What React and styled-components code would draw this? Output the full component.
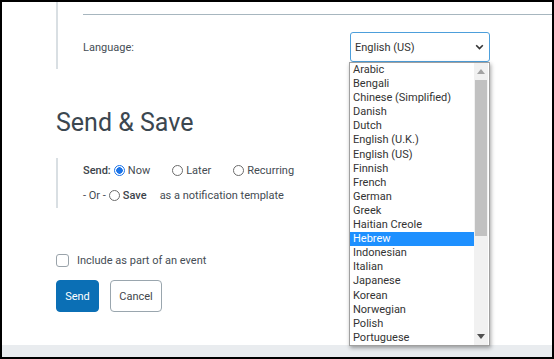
import React, { useState } from 'react';
import styled, { createGlobalStyle } from 'styled-components';

const languages = [
    'Arabic', 'Bengali', 'Chinese (Simplified)', 'Danish', 'Dutch', 'English (U.K.)',
    'English (US)', 'Finnish', 'French', 'German', 'Greek', 'Haitian Creole', 'Hebrew',
    'Indonesian', 'Italian', 'Japanese', 'Korean', 'Norwegian', 'Polish', 'Portuguese',
];

const App = () => {
    const [sendWhen, setSendWhen] = useState('now');
    const hovered = 'Hebrew';

    return (
        <>
            <GlobalStyle />
            <Frame>
                <Content>
                    <Section>
                        <Rule />
                        <FieldRow>
                            <Label>Language:</Label>
                            <SelectWrap>
                                <SelectBox>
                                    <span>English (US)</span>
                                    <svg width="9" height="6" viewBox="0 0 9 6">
                                        <path d="M1.2 1.2 L4.5 4.5 L7.8 1.2" fill="none" stroke="#333" strokeWidth="1.6" />
                                    </svg>
                                </SelectBox>
                                <DropList>
                                    <Options>
                                        {languages.map((lang) => (
                                            <Option key={lang} active={lang === hovered}>{lang}</Option>
                                        ))}
                                    </Options>
                                    <ScrollBar>
                                        <Arrow>
                                            <svg width="8" height="5" viewBox="0 0 8 5"><path d="M0 5 L4 0 L8 5 Z" fill="#a3a3a3" /></svg>
                                        </Arrow>
                                        <Track>
                                            <Thumb />
                                        </Track>
                                        <Arrow>
                                            <svg width="8" height="5" viewBox="0 0 8 5"><path d="M0 0 L4 5 L8 0 Z" fill="#505050" /></svg>
                                        </Arrow>
                                    </ScrollBar>
                                </DropList>
                            </SelectWrap>
                        </FieldRow>
                    </Section>

                    <Heading>Send &amp; Save</Heading>

                    <SendSection>
                        <OptionLine>
                            <Strong>Send:</Strong>
                            <RadioLabel>
                                <Radio type="radio" name="when" checked={sendWhen === 'now'} onChange={() => setSendWhen('now')} />
                                Now
                            </RadioLabel>
                            <RadioLabel gap="19px">
                                <Radio type="radio" name="when" checked={sendWhen === 'later'} onChange={() => setSendWhen('later')} />
                                Later
                            </RadioLabel>
                            <RadioLabel gap="19px">
                                <Radio type="radio" name="when" checked={sendWhen === 'recurring'} onChange={() => setSendWhen('recurring')} />
                                Recurring
                            </RadioLabel>
                        </OptionLine>
                        <OptionLine>
                            <span>- Or -</span>
                            <RadioLabel>
                                <Radio type="radio" name="when" checked={sendWhen === 'save'} onChange={() => setSendWhen('save')} />
                                <Strong>Save</Strong>
                            </RadioLabel>
                            <Muted>as a notification template</Muted>
                        </OptionLine>
                    </SendSection>

                    <CheckRow>
                        <CheckBox type="checkbox" />
                        Include as part of an event
                    </CheckRow>

                    <Buttons>
                        <Button primary>Send</Button>
                        <Button>Cancel</Button>
                    </Buttons>
                </Content>
                <Footer />
            </Frame>
        </>
    );
};

export default App;

const GlobalStyle = createGlobalStyle`
    body {
        margin: 0;
        font-family: Roboto, "Liberation Sans", sans-serif;
        background: #fff;
    }
`;

const Frame = styled.div`
    width: 554px;
    height: 359px;
    box-sizing: border-box;
    border: 2px solid #000;
    display: flex;
    flex-direction: column;
    overflow: hidden;
`;

const Content = styled.div`
    flex: 1;
    padding-left: 54px;
    display: flex;
    flex-direction: column;
    color: #444b52;
    font-size: 11px;
`;

const Section = styled.div`
    border-left: 2px solid #d9dfe3;
    padding-left: 25px;
    padding-top: 12px;
    height: 67px;
    box-sizing: border-box;
`;

const Rule = styled.div`
    height: 1px;
    background: #a7b6bf;
`;

const FieldRow = styled.div`
    display: flex;
    align-items: center;
    justify-content: space-between;
    margin-top: 17px;
    padding-right: 62px;
`;

const Label = styled.span`
    color: #454d55;
`;

const SelectWrap = styled.div`
    position: relative;
`;

const SelectBox = styled.div`
    width: 140px;
    height: 30px;
    box-sizing: border-box;
    border: 1px solid #4d9fdb;
    border-radius: 3px;
    display: flex;
    align-items: center;
    justify-content: space-between;
    padding: 0 5px 0 4px;
    color: #333;
    font-size: 11px;
    background: #fff;
`;

const DropList = styled.div`
    position: absolute;
    top: 100%;
    left: -1px;
    width: 141px;
    height: 284px;
    box-sizing: border-box;
    border: 1px solid #a0a0a0;
    background: #fff;
    box-shadow: 1px 2px 4px rgba(0, 0, 0, 0.35);
    display: flex;
    z-index: 5;
`;

const Options = styled.div`
    flex: 1;
`;

const Option = styled.div`
    height: 14.1px;
    line-height: 14px;
    padding-left: 3px;
    font-size: 11px;
    color: ${props => (props.active ? '#fff' : '#333')};
    background: ${props => (props.active ? '#1e90ff' : 'transparent')};
`;

const ScrollBar = styled.div`
    width: 14px;
    margin: 0 1px 0 0;
    display: flex;
    flex-direction: column;
    background: #f1f1f1;
`;

const Arrow = styled.div`
    height: 17px;
    display: flex;
    align-items: center;
    justify-content: center;
`;

const Track = styled.div`
    flex: 1;
`;

const Thumb = styled.div`
    height: 156px;
    margin: 0 1px;
    background: #c1c1c1;
`;

const Heading = styled.h2`
    margin: 39px 0 0 0;
    font-size: 25px;
    font-weight: 400;
    color: #3b4750;
    line-height: 30px;
`;

const SendSection = styled.div`
    margin-top: 20px;
    border-left: 2px solid #d9dfe3;
    padding-left: 25px;
    height: 50px;
    display: flex;
    flex-direction: column;
    justify-content: center;
    gap: 10px;
`;

const OptionLine = styled.div`
    display: flex;
    align-items: center;
    gap: 3px;
    height: 15px;
`;

const Strong = styled.span`
    font-weight: 500;
    color: #3c434a;
`;

const Muted = styled.span`
    margin-left: 10px;
`;

const RadioLabel = styled.label`
    display: flex;
    align-items: center;
    gap: 2px;
    margin-left: ${props => props.gap || '0'};
`;

const Radio = styled.input`
    appearance: none;
    width: 11px;
    height: 11px;
    margin: 0 1px 0 0;
    border: 1px solid #6b6b6b;
    border-radius: 50%;
    box-sizing: border-box;
    background: #fff;

    &:checked {
        border-color: #1a73e8;
        background: radial-gradient(circle, #1a73e8 0 3px, #fff 3.5px);
    }
`;

const CheckRow = styled.label`
    margin-top: 46px;
    display: flex;
    align-items: center;
    gap: 8px;
    color: #454d55;
`;

const CheckBox = styled.input`
    appearance: none;
    margin: 0;
    width: 13px;
    height: 13px;
    border: 1px solid #9aa3aa;
    border-radius: 3px;
    background: #fff;
`;

const Buttons = styled.div`
    margin-top: 13px;
    display: flex;
    gap: 11px;
`;

const Button = styled.button`
    height: 32px;
    padding: 0;
    border-radius: 4px;
    font-family: Roboto, "Liberation Sans", sans-serif;
    font-size: 11px;
    background: ${props => (props.primary ? '#0b6fb5' : '#fff')};
    color: ${props => (props.primary ? '#fff' : '#3f464c')};
    border: 1px solid ${props => (props.primary ? '#0b6fb5' : '#9aa6ae')};
    width: ${props => (props.primary ? '43px' : '52px')};
`;

const Footer = styled.div`
    height: 12px;
    background: #e9ecef;
`;
